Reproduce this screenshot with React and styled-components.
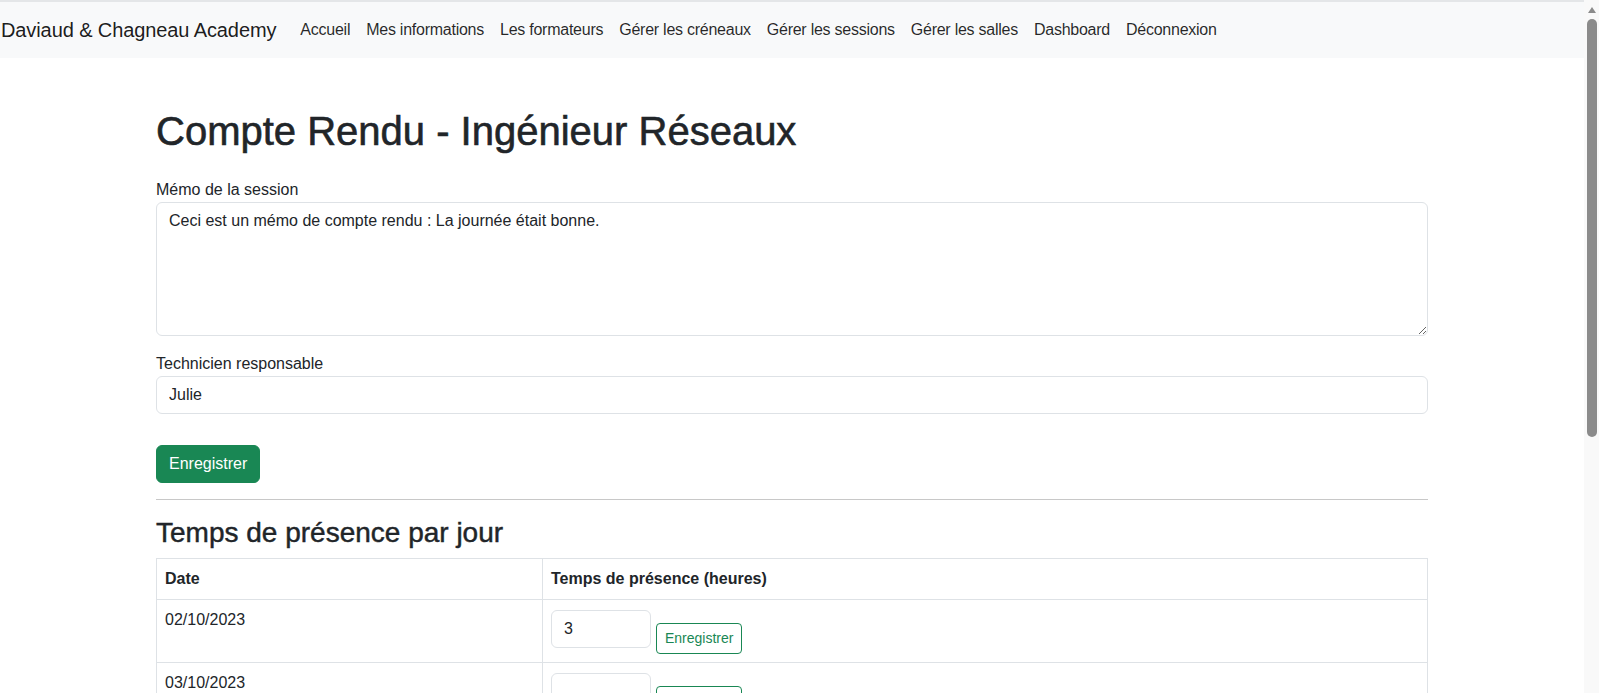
import React from "react";
import styled, { createGlobalStyle } from "styled-components";

const GlobalStyle = createGlobalStyle`
  *, *::before, *::after { box-sizing: border-box; }
  body {
    margin: 0;
    overflow: hidden;
    font-family: "Liberation Sans", Arial, sans-serif;
    font-size: 16px;
    line-height: 1.5;
    color: #212529;
    background: #fff;
  }
`;

/**
 * Window frame: the page on the left, the scrollbar on the right
 */
const Frame = styled("div")`
  display: flex;
  height: 100vh;
`;

const Page = styled("div")`
  flex: 1;
  min-width: 0;
  overflow: hidden;
`;

/**
 * Classic scrollbar drawn beside the page
 */
const ScrollTrack = styled("div")`
  display: flex;
  flex-direction: column;
  align-items: center;
  flex: 0 0 15px;
  padding-top: 7px;
  background: #f9f9f9;
`;

const ScrollArrow = styled("div")`
  width: 0;
  height: 0;
  border-left: 4px solid transparent;
  border-right: 4px solid transparent;
  border-bottom: 6px solid #8b8b8b;
`;

const ScrollThumb = styled("div")`
  width: 10px;
  height: 418px;
  margin-top: 6px;
  background: #8b8b8b;
  border-radius: 5px;
`;

/**
 * Top bar with the academy name and the links
 */
const Navbar = styled("nav")`
  display: flex;
  align-items: center;
  height: 58px;
  padding: 8px 0;
  background: #f8f9fa;
  border-top: 2px solid #e4e6e8;
`;

const Brand = styled("a")`
  padding: 5px 0 5px 1px;
  margin-right: 16px;
  font-size: 20px;
  line-height: 30px;
  letter-spacing: -0.1px;
  color: rgba(0, 0, 0, 0.9);
  text-decoration: none;
  white-space: nowrap;
`;

const NavList = styled("div")`
  display: flex;
`;

const NavLink = styled("a")`
  padding: 8px;
  color: rgba(0, 0, 0, 0.85);
  letter-spacing: -0.25px;
  text-decoration: none;
  white-space: nowrap;
`;

/**
 * Centered page body
 */
const Container = styled("main")`
  max-width: 1272px;
  margin: 0 auto;
  padding-top: 49px;
`;

const Title = styled("h1")`
  margin: 0 0 23px;
  font-size: 40px;
  font-weight: 500;
  line-height: 1.2;
  -webkit-text-stroke: 0.6px currentColor;
`;

const SubTitle = styled("h3")`
  margin: 0 0 8px;
  font-size: 28px;
  font-weight: 500;
  line-height: 1.2;
  -webkit-text-stroke: 0.45px currentColor;
`;

const Field = styled("div")`
  margin-bottom: 16px;
`;

const Label = styled("label")`
  display: block;
`;

const inputBase = `
  display: block;
  width: 100%;
  padding: 6px 12px;
  font: inherit;
  line-height: 24px;
  color: #212529;
  background: #fff;
  border: 1px solid #dee2e6;
  border-radius: 6px;
  outline: none;
`;

const TextArea = styled("textarea")`
  ${inputBase}
  height: 134px;
  resize: vertical;
`;

const Input = styled("input")`
  ${inputBase}
  height: 38px;
`;

const HoursForm = styled("form")`
  display: flex;
  align-items: flex-start;
  gap: 5px;
  margin: 0;
`;

const HoursInput = styled(Input)`
  width: 100px;
  margin-top: 2px;
`;

const Button = styled("button")`
  display: inline-block;
  margin-top: 15px;
  padding: ${(p) => (p.$small ? "4px 8px" : "6px 12px")};
  font-family: inherit;
  font-size: ${(p) => (p.$small ? "14px" : "16px")};
  line-height: 1.5;
  color: ${(p) => (p.$outline ? "#198754" : "#fff")};
  background: ${(p) => (p.$outline ? "transparent" : "#198754")};
  border: 1px solid #198754;
  border-radius: ${(p) => (p.$small ? "4px" : "6px")};
  cursor: pointer;
`;

const Rule = styled("hr")`
  margin: 16px 0;
  border: 0;
  border-top: 1px solid #c8c8c8;
`;

const Table = styled("table")`
  width: 100%;
  border-collapse: collapse;
  margin-bottom: 16px;
`;

const Th = styled("th")`
  width: ${(p) => p.$width || "auto"};
  padding: 8px;
  text-align: left;
  font-weight: 700;
  border: 1px solid #dee2e6;
`;

const Td = styled("td")`
  padding: 8px;
  vertical-align: top;
  border: 1px solid #dee2e6;
`;

const days = [
  { date: "02/10/2023", hours: "3" },
  { date: "03/10/2023", hours: "" },
  { date: "04/10/2023", hours: "" },
  { date: "05/10/2023", hours: "" },
  { date: "06/10/2023", hours: "" },
  { date: "09/10/2023", hours: "" },
  { date: "10/10/2023", hours: "" },
];

const links = [
  "Accueil",
  "Mes informations",
  "Les formateurs",
  "Gérer les créneaux",
  "Gérer les sessions",
  "Gérer les salles",
  "Dashboard",
  "Déconnexion",
];

export default function App() {
  return (
    <Frame>
      <GlobalStyle />
      <Page>
        <Navbar>
          <Brand href="#">Daviaud &amp; Chagneau Academy</Brand>
          <NavList>
            {links.map((l) => (
              <NavLink key={l} href="#">{l}</NavLink>
            ))}
          </NavList>
        </Navbar>
        <Container>
          <Title>Compte Rendu - Ingénieur Réseaux</Title>
          <Field>
            <Label>Mémo de la session</Label>
            <TextArea
              rows={5}
              defaultValue="Ceci est un mémo de compte rendu : La journée était bonne."
            />
          </Field>
          <Field>
            <Label>Technicien responsable</Label>
            <Input defaultValue="Julie" />
          </Field>
          <Button type="button">Enregistrer</Button>
          <Rule />
          <SubTitle>Temps de présence par jour</SubTitle>
          <Table>
            <thead>
              <tr>
                <Th $width="386px">Date</Th>
                <Th>Temps de présence (heures)</Th>
              </tr>
            </thead>
            <tbody>
              {days.map((d) => (
                <tr key={d.date}>
                  <Td>{d.date}</Td>
                  <Td>
                    <HoursForm onSubmit={(e) => e.preventDefault()}>
                      <HoursInput defaultValue={d.hours} />
                      <Button type="button" $small $outline>Enregistrer</Button>
                    </HoursForm>
                  </Td>
                </tr>
              ))}
            </tbody>
          </Table>
        </Container>
      </Page>
      <ScrollTrack>
        <ScrollArrow />
        <ScrollThumb />
      </ScrollTrack>
    </Frame>
  );
}
